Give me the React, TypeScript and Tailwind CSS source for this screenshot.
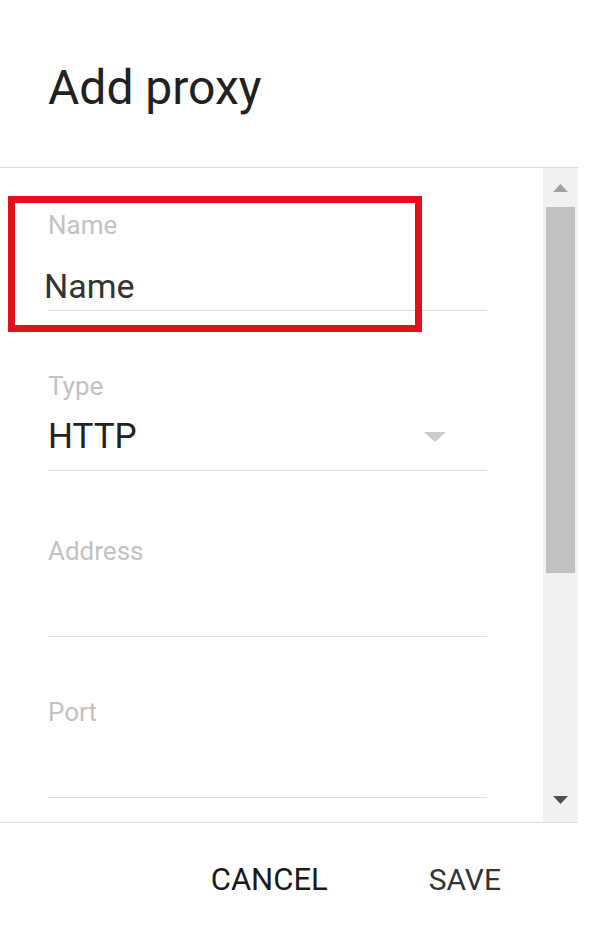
import React from 'react';

const labelCls = "text-[26px] leading-[30px] text-[#c2c2c2]";

function Field({ label, value, top, valueGap, valueCls, bottomPad, children }: {
  label: string;
  value?: string;
  top: string;
  valueGap: string;
  valueCls: string;
  bottomPad: string;
  children?: React.ReactNode;
}) {
  return (
    <div className={`${top} flex flex-col border-b border-[#dedede]`}>
      <div className={labelCls}>{label}</div>
      <div className={`${valueGap} ${bottomPad} flex items-center justify-between h-[40px] box-content`}>
        <span className={valueCls}>{value}</span>
        {children}
      </div>
    </div>
  );
}

function Arrow({ up, color }: { up?: boolean; color: string }) {
  return (
    <svg width="15" height="8" viewBox="0 0 15 8">
      <polygon points={up ? "7.5,0 15,8 0,8" : "0,0 15,0 7.5,8"} fill={color} />
    </svg>
  );
}

export default function App() {
  return (
    <div className="w-[591px] h-[951px] bg-white" style={{ fontFamily: 'Roboto, "Liberation Sans", sans-serif' }}>
      <div className="w-[578px] h-full flex flex-col">
        <div className="h-[168px] shrink-0 border-b border-[#dcdcdc] pl-[48px] pt-[60px]">
          <h1 className="text-[48px] leading-[56px] text-[#212121]">Add proxy</h1>
        </div>

        <div className="relative h-[654px] shrink-0 flex">
          <div className="flex-1 pl-[48px] pr-[56px]">
            <Field label="Name" value="Name" top="mt-[42px]" valueGap="mt-[26px]" bottomPad="pb-[4px]"
              valueCls="-ml-[4px] text-[34px] text-[#333]" />
            <Field label="Type" value="HTTP" top="mt-[60px]" valueGap="mt-[16px]" bottomPad="pb-[13px]"
              valueCls="text-[35px] text-[#222]">
              <svg width="22" height="10" viewBox="0 0 22 10" className="mr-[41px]">
                <polygon points="0,0 22,0 11,10" fill="#cbcbcb" />
              </svg>
            </Field>
            <Field label="Address" top="mt-[65px]" valueGap="mt-[26px]" bottomPad="pb-[4px]" valueCls="" />
            <Field label="Port" top="mt-[60px]" valueGap="mt-[26px]" bottomPad="pb-[4px]" valueCls="" />
          </div>

          <div className="w-[35px] bg-[#f1f1f1] flex flex-col">
            <div className="h-[39px] flex items-center justify-center">
              <Arrow up color="#a3a3a3" />
            </div>
            <div className="h-[366px] mx-[3px] bg-[#c1c1c1]" />
            <div className="flex-1" />
            <div className="h-[44px] flex items-center justify-center">
              <Arrow color="#505050" />
            </div>
          </div>

          <div className="absolute left-[8px] top-[28px] w-[414px] h-[136px] border-[7px] border-[#e3101c]" />
        </div>

        <div className="flex-1 border-t border-[#dcdcdc] flex justify-end items-start gap-[101px] pr-[77px] pt-[39px]">
          <button className="text-[31px] leading-[36px] text-[#1a1a1a]">CANCEL</button>
          <button className="text-[30px] leading-[36px] text-[#333]">SAVE</button>
        </div>
      </div>
    </div>
  );
}
